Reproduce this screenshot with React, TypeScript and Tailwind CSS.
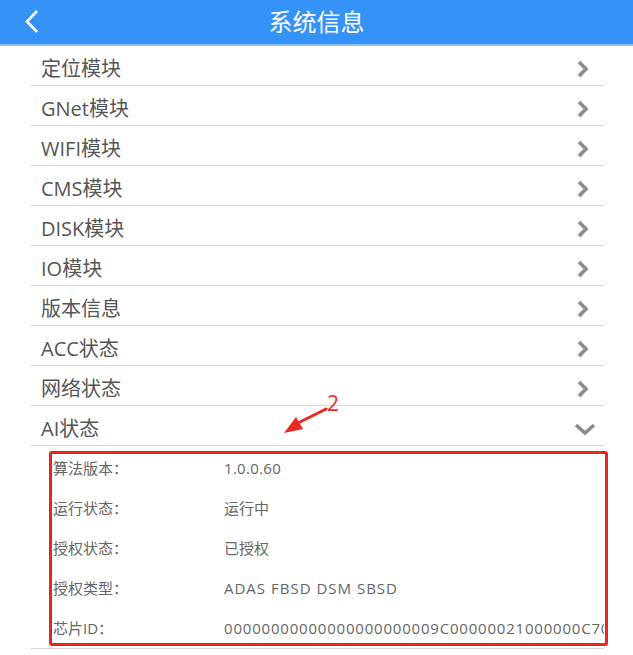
import React from "react";

const rows = ["定位模块", "GNet模块", "WIFI模块", "CMS模块", "DISK模块", "IO模块", "版本信息", "ACC状态", "网络状态"];

const details: [string, string, string][] = [
  ["算法版本：", "1.0.0.60", "tracking-[0.3px]"],
  ["运行状态：", "运行中", ""],
  ["授权状态：", "已授权", ""],
  ["授权类型：", "ADAS FBSD DSM SBSD", "tracking-[1px]"],
  ["芯片ID：", "0000000000000000000000" + "9C00000021000000C70000000000", "tracking-[0.8px]"],
];

function RightChevron() {
  return (
    <svg width="14" height="20" viewBox="0 0 14 20" className="mt-[7px]">
      <polyline points="3,3 10,10 3,17" fill="none" stroke="#8c8c8c" strokeWidth="3.6" strokeLinejoin="miter" />
    </svg>
  );
}

function DownChevron() {
  return (
    <svg width="22" height="14" viewBox="0 0 22 14" className="mt-[6px]">
      <polyline points="2,3 11,11 20,3" fill="none" stroke="#8c8c8c" strokeWidth="3.6" strokeLinejoin="miter" />
    </svg>
  );
}

export default function App() {
  const font = { fontFamily: '"Open Sans", "Noto Sans CJK SC", sans-serif' };
  return (
    <div className="relative w-[633px] h-[655px] bg-white overflow-hidden" style={font}>
      <header className="h-[46px] bg-[#3592f7] border-b-2 border-[#8fc2f8] flex items-center relative">
        <svg width="16" height="26" viewBox="0 0 16 26" className="absolute left-[24px] top-[9px]">
          <polyline points="13,2 3,12.5 13,23" fill="none" stroke="white" strokeWidth="2.6" />
        </svg>
        <div className="w-full text-center text-white text-[24px] leading-none mt-[-1px]">系统信息</div>
      </header>

      <div className="ml-[31px] mr-[29px]">
        {rows.map((r) => (
          <div key={r} className="h-[40px] border-b border-[#d6d6d6] flex items-center justify-between pl-[10px] pr-[14px]">
            <span className="text-[20px] text-[#555555] leading-none mt-[6px]">{r}</span>
            <RightChevron />
          </div>
        ))}
        <div className="h-[40px] border-b border-[#d6d6d6] flex items-center justify-between pl-[10px] pr-[8px]">
          <span className="text-[20px] text-[#555555] leading-none mt-[6px]">AI状态</span>
          <DownChevron />
        </div>
        <div className="border-b border-[#d6d6d6] pt-[2px] overflow-hidden">
          {details.map(([k, v, t]) => (
            <div key={k} className="h-[40px] flex items-center pl-[22px] whitespace-nowrap">
              <span className="w-[171px] shrink-0 text-[15px] text-[#666666]">{k}</span>
              <span className={"text-[15px] text-[#666666] " + t}>{v}</span>
            </div>
          ))}
        </div>
      </div>

      <div className="absolute left-[49px] top-[451px] w-[559px] h-[195px] border-[3px] border-[#e8271c] rounded-[3px] pointer-events-none" />

      <svg width="80" height="50" viewBox="0 0 80 50" className="absolute left-[270px] top-[395px]">
        <line x1="56" y1="14" x2="26" y2="29" stroke="#ee2a1e" strokeWidth="3" strokeLinecap="round" />
        <polygon points="14,38 26,22 33,34" fill="#ee2a1e" />
      </svg>
      <div className="absolute left-[327px] top-[393px] text-[21px] leading-none text-[#ee2a1e]">2</div>
    </div>
  );
}
